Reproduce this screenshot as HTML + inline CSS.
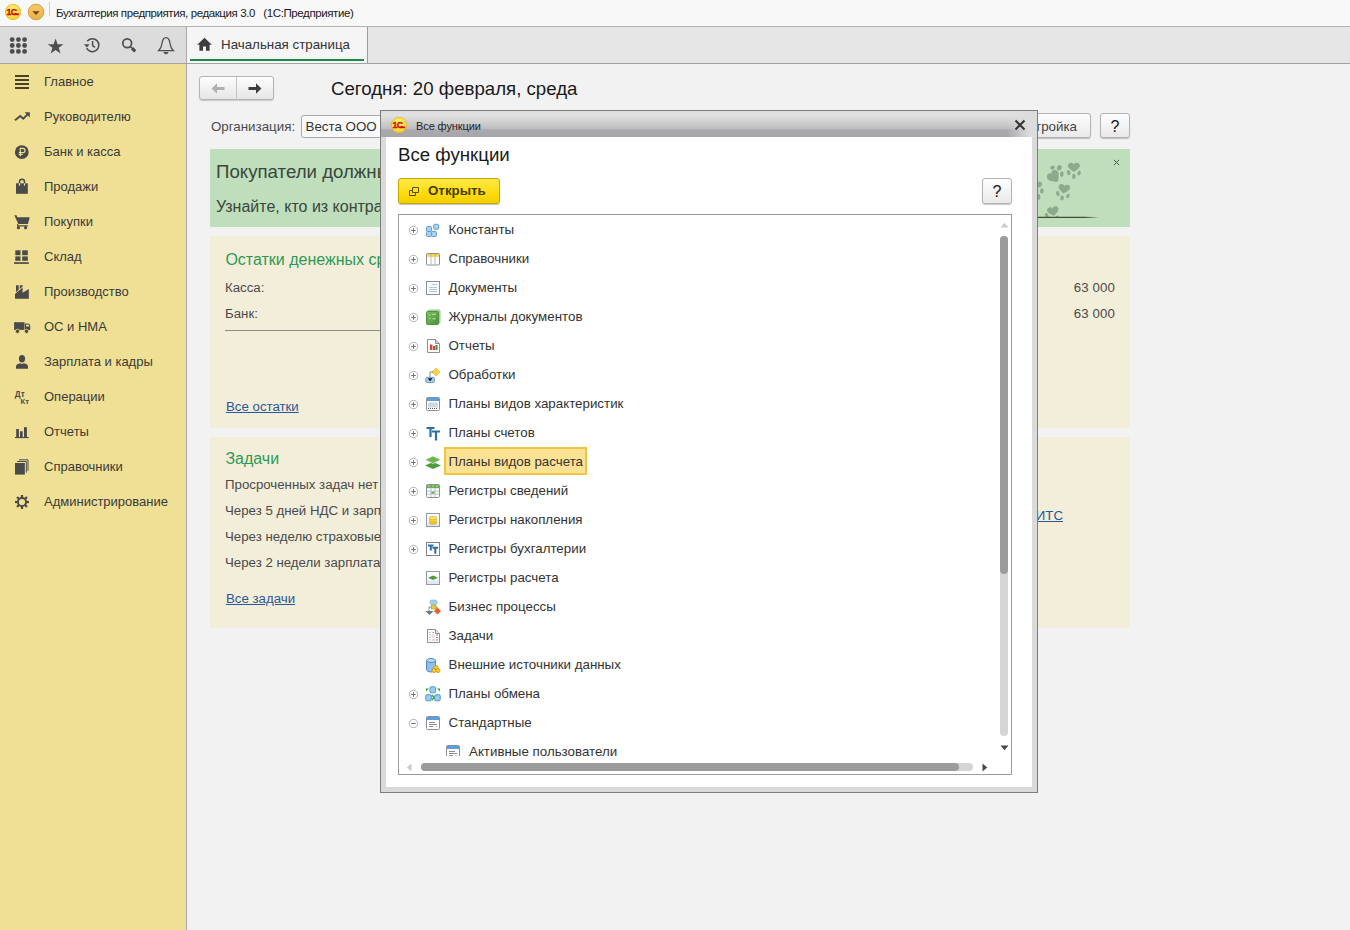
<!DOCTYPE html>
<html lang="ru">
<head>
<meta charset="utf-8">
<title>Бухгалтерия предприятия, редакция 3.0</title>
<style>
*{box-sizing:border-box;margin:0;padding:0}
html,body{width:1350px;height:930px;overflow:hidden}
body{position:relative;background:#f2f2f2;font-family:"Liberation Sans",Arial,sans-serif;font-size:13.33px;color:#333;}
.abs{position:absolute}
#titlebar{left:0;top:0;width:1350px;height:27px;background:#f8f8f8;border-bottom:1px solid #b4b4b4}
#titlebar .t{left:56px;top:6px;font-size:11.5px;line-height:14px;color:#1a1a1a;white-space:pre;letter-spacing:-0.4px}
#toolbar{left:0;top:27px;width:1350px;height:37px;background:linear-gradient(to right,#dcdcdc 186px,#e6e6e6 186px);border-bottom:1px solid #a3a3a3}
#tab{left:187px;top:27px;width:181px;height:36px;background:#f5f5f5;border-right:1px solid #9c9c9c}
#tab .u{left:3px;top:32px;width:174px;height:2px;background:#198a4a}
#tab .t{left:34px;top:10px;color:#333;white-space:nowrap}
#sidebar{left:0;top:64px;width:187px;height:866px;background:#f0e095;border-right:1px solid #a9a9a9}
.si{left:0;width:186px;height:35px}
.si span{position:absolute;left:44px;top:9px;white-space:nowrap;color:#3a3a3a}
.si svg{position:absolute;left:0;top:0;width:44px;height:35px}

.si span{top:10px;font-size:13px}
#navb{left:199px;top:76px;width:75px;height:24px;border:1px solid #b4b4b4;border-radius:3px;background:linear-gradient(#fdfdfd,#e6e6e6);box-shadow:0 1px 1px rgba(0,0,0,.18)}
#navb i{position:absolute;left:36px;top:0;width:1px;height:23px;background:#c4c4c4}
#today{left:331px;top:78px;font-size:18.67px;line-height:21px;color:#1a1a1a;white-space:nowrap}
#orgl{left:211px;top:119px;line-height:16px;color:#4a4a4a;white-space:nowrap}
#orgi{left:301px;top:115px;width:700px;height:23px;border:1px solid #a9a9a9;border-radius:3px;background:#f9f9f9}
#orgi span{position:absolute;left:3.5px;top:3px;line-height:16px;color:#333;white-space:nowrap}
.btn{border:1px solid #b3b3b3;border-radius:3px;background:linear-gradient(#fefefe,#e9e9e9);box-shadow:0 1px 1px rgba(0,0,0,.22);color:#333;text-align:center;white-space:nowrap}
#setb{left:1000px;top:113px;width:91px;height:25px;line-height:26px;text-align:right;padding-right:13px;color:#444}
#helpb{left:1100px;top:113px;width:30px;height:25px;line-height:26px;font-size:16px;color:#111}
#banner{left:210px;top:149px;width:920px;height:78px;background:#bedebc;overflow:hidden}
#banner .h{left:6px;top:12px;font-size:18.67px;line-height:22px;color:#3a463a;white-space:nowrap}
#banner .p{left:6px;top:48px;font-size:16px;line-height:20px;color:#3a463a;white-space:nowrap}
#banner .x{left:901px;top:8px;width:10px;height:10px}
.panel{left:210px;width:920px;background:#f3eeda}
.panel .h{left:15.4px;margin-top:1px;font-size:16px;line-height:20px;color:#2c9a55;white-space:nowrap}
.panel .l{left:15px;margin-top:1px;font-size:13.25px;line-height:16px;color:#4a4a4a;white-space:nowrap}
.panel .a{left:16px;margin-top:1px;font-size:13.25px;line-height:16px;color:#2b579a;text-decoration:underline;white-space:nowrap}
.panel .r{right:15px;margin-top:1px;font-size:13.25px;line-height:16px;color:#4a4a4a;white-space:nowrap;letter-spacing:.1px}

#dlg{left:380px;top:110px;width:658px;height:683px;border:1px solid #7d7d7d;background:#dadada}
#dlgt{left:0;top:0;width:656px;height:26px;background:linear-gradient(#dcdcdc 0%,#e2e2e2 14%,#d2d2d2 40%,#bdbdbf 69%,#aaaaae 72%,#a6a6aa 100%)}
#dlgt:after{content:"";position:absolute;left:626px;top:0;width:30px;height:26px;background:linear-gradient(to right,rgba(220,220,220,0),rgba(220,220,220,1) 75%)}
#dlgt .t{left:35px;top:9px;font-size:11px;line-height:13px;color:#222;white-space:nowrap;letter-spacing:-.1px}
#dlgc{left:5px;top:26px;width:646px;height:650px;background:#fff}
#dlgc .h{left:12px;top:7px;font-size:18.67px;line-height:21px;color:#1a1a1a;white-space:nowrap}
#openb{left:12px;top:41px;width:102px;height:26px;border:1px solid #c9a700;border-radius:3px;background:linear-gradient(#ffe94a,#ffdd10 55%,#f3cf00);box-shadow:0 1px 1px rgba(0,0,0,.25)}
#openb span{position:absolute;left:29px;top:4px;font-weight:bold;font-size:13.33px;line-height:16px;color:#453a00;white-space:nowrap}
#dhelp{left:596px;top:41px;width:30px;height:26px;line-height:26px;font-size:16px;color:#111}
#tree{left:12px;top:77px;width:614px;height:561px;border:1px solid #9c9c9c;background:#fff;overflow:hidden}
.tr{left:0;width:600px;height:29px}
.tr span{position:absolute;left:49.5px;top:0;line-height:27px;font-size:13.33px;color:#333;white-space:nowrap}
.tr .e{position:absolute;left:9px;top:9px;width:11px;height:11px}
.tr .ic{position:absolute;left:26px;top:6px;width:16px;height:16px}
.tr.c span{left:70px}
.tr.c .ic{left:46px}
#sel{left:45px;top:232px;width:143px;height:28px;background:#fbe294;border:2px solid #f0c53e}
</style>
</head>
<body>
<div id="titlebar" class="abs"><svg class="abs" style="left:4px;top:3px" width="18" height="18" viewBox="0 0 18 18"><defs><radialGradient id="lg13" cx="50%" cy="35%" r="70%"><stop offset="0" stop-color="#fff27a"/><stop offset="1" stop-color="#f4cf22"/></radialGradient></defs><circle cx="9" cy="9" r="7.7" fill="url(#lg13)" stroke="#dcb932" stroke-width=".8"/><text x="2.5" y="12.2" font-family="Liberation Sans,sans-serif" font-weight="bold" font-size="8.8" fill="#cc0f0c" stroke="#cc0f0c" stroke-width=".35" letter-spacing="-0.6">1С</text><path d="M9.6 11.35H15" stroke="#cc0f0c" stroke-width="1.7"/></svg><svg class="abs" style="left:27px;top:3px" width="18" height="18" viewBox="0 0 18 18"><defs><linearGradient id="og" x1="0" y1="0" x2="0" y2="1"><stop offset="0" stop-color="#f6c869"/><stop offset="1" stop-color="#eeb042"/></linearGradient></defs><circle cx="9" cy="9" r="7.8" fill="url(#og)" stroke="#c99a3e" stroke-width=".9"/><path d="M5.3 8.2H12.7L9 12Z" fill="#6a4a12"/></svg><div class="abs" style="left:49px;top:2px;width:1px;height:14px;background:#d0d0d0"></div><span class="t abs">Бухгалтерия предприятия, редакция 3.0   (1С:Предприятие)</span></div>
<div id="toolbar" class="abs"><svg class="abs" style="left:0;top:0" width="186" height="36" viewBox="0 0 186 36"><circle cx="12.2" cy="12.6" r="2.4" fill="#4d4d4d"/><circle cx="18.4" cy="12.6" r="2.4" fill="#4d4d4d"/><circle cx="24.6" cy="12.6" r="2.4" fill="#4d4d4d"/><circle cx="12.2" cy="18.5" r="2.4" fill="#4d4d4d"/><circle cx="18.4" cy="18.5" r="2.4" fill="#4d4d4d"/><circle cx="24.6" cy="18.5" r="2.4" fill="#4d4d4d"/><circle cx="12.2" cy="24.4" r="2.4" fill="#4d4d4d"/><circle cx="18.4" cy="24.4" r="2.4" fill="#4d4d4d"/><circle cx="24.6" cy="24.4" r="2.4" fill="#4d4d4d"/><polygon points="55.60,11.50 57.54,17.13 63.49,17.24 58.74,20.82 60.48,26.51 55.60,23.10 50.72,26.51 52.46,20.82 47.71,17.24 53.66,17.13" fill="#4d4d4d"/><path d="M87.2 14.2A6.5 6.5 0 1 1 86.6 21.2" stroke="#4d4d4d" stroke-width="1.5" fill="none"/><path d="M84 17.2H89.6L86.8 20.6Z" fill="#4d4d4d"/><path d="M92.6 14V18.6L95 20.4" stroke="#4d4d4d" stroke-width="1.5" fill="none"/><circle cx="127.2" cy="16.3" r="4.4" stroke="#4d4d4d" stroke-width="1.7" fill="none"/><path d="M130.6 19.8L132 21.2" stroke="#4d4d4d" stroke-width="1.7"/><path d="M132 21.2L135.2 24.4" stroke="#4d4d4d" stroke-width="3.2" fill="none"/><path d="M166 10.6C163 10.6 162.4 13.4 162 16.5C161.6 19.6 160.6 21.8 158.6 23.7H173.4C171.4 21.8 170.4 19.6 170 16.5C169.6 13.4 169 10.6 166 10.6Z" stroke="#4d4d4d" stroke-width="1.3" fill="none"/><path d="M163.8 25.6H168.2L166 27Z" stroke="#4d4d4d" stroke-width="1" fill="#4d4d4d"/></svg><div class="abs" style="left:186px;top:0;width:1px;height:36px;background:#a9a9a9"></div></div>
<div id="tab" class="abs"><svg class="abs" style="left:0;top:0" width="34" height="36" viewBox="0 0 34 36"><path d="M17.5 10.8L10.2 17.8H12.4V23.7H16V19.6H19V23.7H22.6V17.8H24.8Z" fill="#3e3e3e"/></svg><span class="t abs">Начальная страница</span><div class="u abs"></div></div>
<div id="sidebar" class="abs">
<div class="si abs" style="top:0px"><svg viewBox="0 0 44 35"><path d="M15 12H29M15 16H29M15 20H29M15 24H29" stroke="#4b4424" stroke-width="2" fill="none"/></svg><span>Главное</span></div>
<div class="si abs" style="top:35px"><svg viewBox="0 0 44 35"><path d="M15 21.3L20.3 17L23.3 19.6L27.6 15.3" stroke="#4a4a4a" stroke-width="1.9" fill="none" stroke-linejoin="miter"/><path d="M24.6 13.2H29.8V18.4Z" fill="#4a4a4a"/></svg><span>Руководителю</span></div>
<div class="si abs" style="top:70px"><svg viewBox="0 0 44 35"><circle cx="21.8" cy="18.1" r="6.9" fill="#4a4a4a"/><path d="M20.3 22.3V14.4H22.9A2.1 2.1 0 0 1 22.9 18.6H18.8M18.8 20.5H22.8" stroke="#f0e095" stroke-width="1.2" fill="none"/></svg><span>Банк и касса</span></div>
<div class="si abs" style="top:105px"><svg viewBox="0 0 44 35"><path d="M16 14.3H27.8V24.8H16Z" fill="#4a4a4a"/><path d="M19.5 17V12.8A2.5 2.5 0 0 1 24.5 12.8V17" stroke="#4a4a4a" stroke-width="1.5" fill="none"/><path d="M19.5 14.3V16.8M24.5 14.3V16.8" stroke="#f0e095" stroke-width="1.2"/></svg><span>Продажи</span></div>
<div class="si abs" style="top:140px"><svg viewBox="0 0 44 35"><path d="M14.3 11.3H16.6L17.2 13.2H29.8L27.9 20H18.3Z" fill="#4a4a4a"/><path d="M17.6 20V21.8H27.8" stroke="#4a4a4a" stroke-width="1.2" fill="none"/><circle cx="18.4" cy="23.7" r="1.6" fill="#4a4a4a"/><circle cx="25.6" cy="23.7" r="1.6" fill="#4a4a4a"/></svg><span>Покупки</span></div>
<div class="si abs" style="top:175px"><svg viewBox="0 0 44 35"><rect x="15.3" y="11.3" width="5.2" height="4.9" fill="#4a4a4a"/><rect x="22.2" y="11.3" width="5.6" height="4.9" fill="#4a4a4a"/><rect x="15.3" y="17.4" width="5.2" height="4.4" fill="#4a4a4a"/><rect x="22.2" y="17.4" width="5.6" height="4.4" fill="#4a4a4a"/><rect x="14.1" y="23.2" width="14.7" height="1.7" fill="#4a4a4a"/></svg><span>Склад</span></div>
<div class="si abs" style="top:210px"><svg viewBox="0 0 44 35"><path d="M15 24.8V20L22.6 13.4V18.8L28.8 15V24.8Z" fill="#4a4a4a"/><path d="M16 11.3H18.7V15.8L16 18.2ZM19.8 11.3H22.6V12.6L19.8 15Z" fill="#4a4a4a"/></svg><span>Производство</span></div>
<div class="si abs" style="top:245px"><svg viewBox="0 0 44 35"><path d="M14.1 13.2H24.5V20.9H14.1Z" fill="#4a4a4a"/><path d="M25 14.4H27.6A2.6 2.6 0 0 1 30.2 17V20.9H25Z" fill="#4a4a4a"/><path d="M26.2 15.4H28A1.4 1.4 0 0 1 29.2 16.8V17.6H26.2Z" fill="#e9dcae"/><circle cx="17.5" cy="22.3" r="2.1" fill="#4a4a4a" stroke="#f0e095" stroke-width=".7"/><circle cx="26.5" cy="22.3" r="2.1" fill="#4a4a4a" stroke="#f0e095" stroke-width=".7"/></svg><span>ОС и НМА</span></div>
<div class="si abs" style="top:280px"><svg viewBox="0 0 44 35"><ellipse cx="22" cy="14.7" rx="3.1" ry="3.7" fill="#4a4a4a"/><path d="M16 24.8V22.4C16 20.4 18 19.6 20 19.2L22 20L24 19.2C26 19.6 28 20.4 28 22.4V24.8Z" fill="#4a4a4a"/></svg><span>Зарплата и кадры</span></div>
<div class="si abs" style="top:315px"><svg viewBox="0 0 44 35"><text x="14.8" y="17.6" font-family="Liberation Sans,sans-serif" font-weight="bold" font-size="8.2" fill="#4a4a4a">Дт</text><text x="20.5" y="24.8" font-family="Liberation Sans,sans-serif" font-weight="bold" font-size="7.6" fill="#4a4a4a">Кт</text></svg><span>Операции</span></div>
<div class="si abs" style="top:350px"><svg viewBox="0 0 44 35"><rect x="16.2" y="15" width="2.7" height="8" fill="#4a4a4a"/><rect x="20" y="17.3" width="2.7" height="5.7" fill="#4a4a4a"/><rect x="24" y="13.2" width="2.9" height="9.8" fill="#4a4a4a"/><rect x="15" y="23" width="13.8" height="1.1" fill="#4a4a4a"/></svg><span>Отчеты</span></div>
<div class="si abs" style="top:385px"><svg viewBox="0 0 44 35"><rect x="15" y="14" width="9.8" height="11.6" fill="#4a4a4a"/><path d="M17 12.5H26.3V23.6M19 10.8H28V21.8" stroke="#4a4a4a" stroke-width="1" fill="none"/></svg><span>Справочники</span></div>
<div class="si abs" style="top:420px"><svg viewBox="0 0 44 35"><circle cx="22" cy="18" r="4.1" fill="none" stroke="#4a4a4a" stroke-width="2"/><rect x="20.9" y="11" width="2.2" height="3" fill="#4a4a4a" transform="rotate(0 22 18)"/><rect x="20.9" y="11" width="2.2" height="3" fill="#4a4a4a" transform="rotate(45 22 18)"/><rect x="20.9" y="11" width="2.2" height="3" fill="#4a4a4a" transform="rotate(90 22 18)"/><rect x="20.9" y="11" width="2.2" height="3" fill="#4a4a4a" transform="rotate(135 22 18)"/><rect x="20.9" y="11" width="2.2" height="3" fill="#4a4a4a" transform="rotate(180 22 18)"/><rect x="20.9" y="11" width="2.2" height="3" fill="#4a4a4a" transform="rotate(225 22 18)"/><rect x="20.9" y="11" width="2.2" height="3" fill="#4a4a4a" transform="rotate(270 22 18)"/><rect x="20.9" y="11" width="2.2" height="3" fill="#4a4a4a" transform="rotate(315 22 18)"/></svg><span>Администрирование</span></div>
</div>
<div id="navb" class="abs"><i></i>
<svg class="abs" style="left:10px;top:5px" width="16" height="13" viewBox="0 0 16 13"><path d="M7 1.2 L1.6 6.5 L7 11.8 L7 8 L14.5 8 L14.5 5 L7 5 Z" fill="#b0b0b0"/></svg>
<svg class="abs" style="left:47px;top:5px" width="16" height="13" viewBox="0 0 16 13"><path d="M9 1.2 L14.4 6.5 L9 11.8 L9 8 L1.5 8 L1.5 5 L9 5 Z" fill="#3d3d3d"/></svg>
</div>
<div id="today" class="abs">Сегодня: 20 февраля, среда</div>
<div id="orgl" class="abs">Организация:</div>
<div id="orgi" class="abs"><span>Веста ООО</span></div>
<div id="setb" class="abs btn">Настройка</div>
<div id="helpb" class="abs btn">?</div>
<div id="banner" class="abs">
<div class="h abs">Покупатели должны вам деньги?</div>
<div class="p abs">Узнайте, кто из контрагентов и сколько должен вам заплатить</div>
<svg class="abs" style="left:800px;top:0" width="120" height="78" viewBox="0 0 120 78"><defs><clipPath id="pc"><rect x="0" y="0" width="120" height="68"/></clipPath></defs><g fill="#8fa98c" clip-path="url(#pc)"><path d="M0,0.85C-0.3,0.6 -1,0.1 -1,-0.35C-1,-0.75 -0.7,-0.95 -0.45,-0.95C-0.2,-0.95 0,-0.75 0,-0.55C0,-0.75 0.2,-0.95 0.45,-0.95C0.7,-0.95 1,-0.75 1,-0.35C1,0.1 0.3,0.6 0,0.85Z" transform="translate(63.9,18.6) rotate(0) scale(6.0,5.2)"/><ellipse cx="58.7" cy="23.6" rx="1.7" ry="2.6" transform="rotate(-20 58.7 23.6)"/><ellipse cx="63.9" cy="27.4" rx="1.8" ry="2.6" transform="rotate(0 63.9 27.4)"/><ellipse cx="69" cy="24.1" rx="1.7" ry="2.4" transform="rotate(20 69 24.1)"/><path d="M0,0.85C-0.3,0.6 -1,0.1 -1,-0.35C-1,-0.75 -0.7,-0.95 -0.45,-0.95C-0.2,-0.95 0,-0.75 0,-0.55C0,-0.75 0.2,-0.95 0.45,-0.95C0.7,-0.95 1,-0.75 1,-0.35C1,0.1 0.3,0.6 0,0.85Z" transform="translate(54.1,40.2) rotate(8) scale(5.8,5.0)"/><ellipse cx="47.8" cy="44.6" rx="1.7" ry="2.6" transform="rotate(-15 47.8 44.6)"/><ellipse cx="52" cy="49" rx="1.8" ry="2.6" transform="rotate(5 52 49)"/><ellipse cx="57.9" cy="46.9" rx="1.7" ry="2.3" transform="rotate(25 57.9 46.9)"/><path d="M0,0.85C-0.3,0.6 -1,0.1 -1,-0.35C-1,-0.75 -0.7,-0.95 -0.45,-0.95C-0.2,-0.95 0,-0.75 0,-0.55C0,-0.75 0.2,-0.95 0.45,-0.95C0.7,-0.95 1,-0.75 1,-0.35C1,0.1 0.3,0.6 0,0.85Z" transform="translate(44.3,28.3) rotate(-38) scale(6.3,6.8)"/><ellipse cx="42.5" cy="18.6" rx="2.4" ry="1.9" transform="rotate(-30 42.5 18.6)"/><ellipse cx="49.3" cy="18.8" rx="2.3" ry="2.8" transform="rotate(20 49.3 18.8)"/><ellipse cx="51.8" cy="25.1" rx="1.8" ry="2.8" transform="rotate(5 51.8 25.1)"/><path d="M0,0.85C-0.3,0.6 -1,0.1 -1,-0.35C-1,-0.75 -0.7,-0.95 -0.45,-0.95C-0.2,-0.95 0,-0.75 0,-0.55C0,-0.75 0.2,-0.95 0.45,-0.95C0.7,-0.95 1,-0.75 1,-0.35C1,0.1 0.3,0.6 0,0.85Z" transform="translate(43.2,62.6) rotate(-12) scale(5.8,5.2)"/><ellipse cx="36.7" cy="66.5" rx="1.7" ry="2.6" transform="rotate(-20 36.7 66.5)"/><ellipse cx="47.5" cy="68.5" rx="1.6" ry="2" transform="rotate(0 47.5 68.5)"/><ellipse cx="29.4" cy="35.4" rx="2.4" ry="2.8" transform="rotate(20 29.4 35.4)"/><ellipse cx="31.9" cy="41.9" rx="1.9" ry="2.6" transform="rotate(0 31.9 41.9)"/><ellipse cx="28.5" cy="47.9" rx="1.9" ry="2.8" transform="rotate(-10 28.5 47.9)"/></g><path d="M0 67.7H74L89 68.3L74 69H0Z" fill="#4b4a33"/></svg>
<svg class="x abs" viewBox="0 0 10 10"><path d="M2.9 2.9L8.1 8.1M8.1 2.9L2.9 8.1" stroke="#4c5a4c" stroke-width="1" fill="none"/></svg>
</div>
<div class="panel abs" style="top:236px;height:192px">
<div class="h abs" style="top:13px">Остатки денежных средств</div>
<div class="l abs" style="top:43px">Касса:</div>
<div class="r abs" style="top:43px">63 000</div>
<div class="l abs" style="top:69px">Банк:</div>
<div class="r abs" style="top:69px">63 000</div>
<div class="abs" style="left:15px;top:94px;width:690px;height:1px;background:#8c8c8c"></div>
<div class="a abs" style="top:162px">Все остатки</div>
</div>
<div class="panel abs" style="top:437px;height:191px">
<div class="h abs" style="top:11px">Задачи</div>
<div class="l abs" style="top:39px">Просроченных задач нет</div>
<div class="l abs" style="top:65px">Через 5 дней НДС и зарплата</div>
<div class="l abs" style="top:91px">Через неделю страховые взносы</div>
<div class="l abs" style="top:117px">Через 2 недели зарплата</div>
<div class="a abs" style="top:153px">Все задачи</div>
<div class="a abs" style="top:70px;left:auto;right:67px">Подключить 1С:ИТС</div>
</div>
<!--MAIN-->
<div id="dlg" class="abs">
<div id="dlgt" class="abs"><svg class="abs" style="left:9px;top:5px" width="18" height="18" viewBox="0 0 18 18"><defs><radialGradient id="lgd" cx="50%" cy="35%" r="70%"><stop offset="0" stop-color="#fff27a"/><stop offset="1" stop-color="#f4cf22"/></radialGradient></defs><circle cx="9" cy="9" r="7.7" fill="url(#lgd)" stroke="#dcb932" stroke-width=".8"/><text x="2.5" y="12.2" font-family="Liberation Sans,sans-serif" font-weight="bold" font-size="8.8" fill="#cc0f0c" stroke="#cc0f0c" stroke-width=".35" letter-spacing="-0.6">1С</text><path d="M9.6 11.35H15" stroke="#cc0f0c" stroke-width="1.7"/></svg><span class="t abs">Все функции</span>
<svg class="abs" style="left:633px;top:7.5px;z-index:2" width="12" height="12" viewBox="0 0 12 12"><path d="M1.5 1.5L10.5 10.5M10.5 1.5L1.5 10.5" stroke="#333" stroke-width="2" fill="none"/></svg>
</div>
<div id="dlgc" class="abs">
<div class="h abs">Все функции</div>
<div id="openb" class="abs"><svg class="abs" style="left:10px;top:8px" width="10" height="9" viewBox="0 0 10 9"><path d="M3.5 0.5H9.5V5.5H3.5Z M0.5 3.5H3.5 M0.5 3.5V8.5H6.5V5.5" stroke="#5a4c00" stroke-width="1" fill="none"/></svg><span>Открыть</span></div>
<div id="dhelp" class="abs btn">?</div>
<div id="tree" class="abs">
<div id="sel" class="abs"></div>
<div class="tr abs" style="top:1px"><svg class="e" viewBox="0 0 11 11"><circle cx="5.5" cy="5.5" r="4.2" fill="#fff" stroke="#ababab" stroke-width=".9"/><path d="M3.2 5.5H7.8M5.5 3.2V7.8" stroke="#666" stroke-width=".9" fill="none"/></svg><svg class="ic" viewBox="0 0 16 16"><rect x="1.5" y="4.5" width="5" height="5" rx="1" fill="#a9d0ef" stroke="#5f9fd6"/><rect x="1.5" y="9.5" width="5" height="5" rx="1" fill="#a9d0ef" stroke="#5f9fd6"/><rect x="6.5" y="9.5" width="5" height="5" rx="1" fill="#a9d0ef" stroke="#5f9fd6"/><rect x="8.7" y="2.3" width="5" height="5" rx="1" fill="#a9d0ef" stroke="#5f9fd6"/></svg><span>Константы</span></div>
<div class="tr abs" style="top:30px"><svg class="e" viewBox="0 0 11 11"><circle cx="5.5" cy="5.5" r="4.2" fill="#fff" stroke="#ababab" stroke-width=".9"/><path d="M3.2 5.5H7.8M5.5 3.2V7.8" stroke="#666" stroke-width=".9" fill="none"/></svg><svg class="ic" viewBox="0 0 16 16"><rect x="1.5" y="2.5" width="13" height="11.5" rx="1" fill="#fff" stroke="#8f8f8f"/><rect x="2" y="3" width="12" height="2.8" fill="#f5d84a"/><path d="M6 3V13.5M10 3V13.5" stroke="#a8a8a8" stroke-width=".8" fill="none"/></svg><span>Справочники</span></div>
<div class="tr abs" style="top:59px"><svg class="e" viewBox="0 0 11 11"><circle cx="5.5" cy="5.5" r="4.2" fill="#fff" stroke="#ababab" stroke-width=".9"/><path d="M3.2 5.5H7.8M5.5 3.2V7.8" stroke="#666" stroke-width=".9" fill="none"/></svg><svg class="ic" viewBox="0 0 16 16"><rect x="1.5" y="1.5" width="13" height="13" fill="#fdfdfd" stroke="#8a9098"/><path d="M7 4.5H12M4 7.5H12M4 9.5H12M4 11.5H12" stroke="#a9c6e3" fill="none"/></svg><span>Документы</span></div>
<div class="tr abs" style="top:88px"><svg class="e" viewBox="0 0 11 11"><circle cx="5.5" cy="5.5" r="4.2" fill="#fff" stroke="#ababab" stroke-width=".9"/><path d="M3.2 5.5H7.8M5.5 3.2V7.8" stroke="#666" stroke-width=".9" fill="none"/></svg><svg class="ic" viewBox="0 0 16 16"><rect x="3" y="1" width="12" height="13" rx="1" fill="#b8d9a8" stroke="#9cc38b"/><defs><linearGradient id="jg" x1="0" y1="0" x2="1" y2="1"><stop offset="0" stop-color="#7cc063"/><stop offset="1" stop-color="#4c9139"/></linearGradient></defs><rect x="1.5" y="2.5" width="12" height="13" rx="1" fill="url(#jg)" stroke="#4f9440"/><path d="M4 6H5.5M4 9.5H5.5M7 5.2H11M7.5 9.8H10.5" stroke="#b9e0a8" fill="none"/></svg><span>Журналы документов</span></div>
<div class="tr abs" style="top:117px"><svg class="e" viewBox="0 0 11 11"><circle cx="5.5" cy="5.5" r="4.2" fill="#fff" stroke="#ababab" stroke-width=".9"/><path d="M3.2 5.5H7.8M5.5 3.2V7.8" stroke="#666" stroke-width=".9" fill="none"/></svg><svg class="ic" viewBox="0 0 16 16"><path d="M2.5 1.5H10.5L14.5 5.5V14.5H2.5Z" fill="#fff" stroke="#8a90a0"/><path d="M10.5 1.5V5.5H14.5" fill="#c9d3e2" stroke="#8a90a0"/><rect x="5" y="6.5" width="2.4" height="5.5" fill="#d9443a"/><rect x="8" y="8" width="2" height="4" fill="#d9443a"/><rect x="10.4" y="7" width="2.2" height="5" fill="#3e9a44"/></svg><span>Отчеты</span></div>
<div class="tr abs" style="top:146px"><svg class="e" viewBox="0 0 11 11"><circle cx="5.5" cy="5.5" r="4.2" fill="#fff" stroke="#ababab" stroke-width=".9"/><path d="M3.2 5.5H7.8M5.5 3.2V7.8" stroke="#666" stroke-width=".9" fill="none"/></svg><svg class="ic" viewBox="0 0 16 16"><path d="M11 1L15 5L11 9L7 5Z" fill="#f7d53f" stroke="#e0b92a" stroke-width=".6"/><path d="M7.5 5H5V10" stroke="#222" stroke-dasharray="1 1" fill="none"/><rect x="0.8" y="10.3" width="8.6" height="5.2" rx="1" fill="#a8cdea" stroke="#6fa4cf"/><path d="M2.6 11.3H7.6L5.1 14.2Z" fill="#111"/></svg><span>Обработки</span></div>
<div class="tr abs" style="top:175px"><svg class="e" viewBox="0 0 11 11"><circle cx="5.5" cy="5.5" r="4.2" fill="#fff" stroke="#ababab" stroke-width=".9"/><path d="M3.2 5.5H7.8M5.5 3.2V7.8" stroke="#666" stroke-width=".9" fill="none"/></svg><svg class="ic" viewBox="0 0 16 16"><rect x="1.5" y="1.5" width="13" height="13" rx="1" fill="#fff" stroke="#8a9098"/><rect x="2" y="2" width="12" height="3" fill="#5b9fe0"/><path d="M4 6.5V11.5M6 6.5V11.5M8 6.5V11.5M10 6.5V11.5M12 6.5V11.5" stroke="#9fb0c4" fill="none"/><path d="M3 12.5H13" stroke="#555" stroke-dasharray="1 1" fill="none"/></svg><span>Планы видов характеристик</span></div>
<div class="tr abs" style="top:204px"><svg class="e" viewBox="0 0 11 11"><circle cx="5.5" cy="5.5" r="4.2" fill="#fff" stroke="#ababab" stroke-width=".9"/><path d="M3.2 5.5H7.8M5.5 3.2V7.8" stroke="#666" stroke-width=".9" fill="none"/></svg><svg class="ic" viewBox="0 0 16 16"><path d="M1.5 3H9.5M5.5 3V12" stroke="#2f6ea5" stroke-width="2.2" fill="none"/><path d="M7 6.5H15M11 6.5V15.5" stroke="#2f6ea5" stroke-width="2.2" fill="none"/></svg><span>Планы счетов</span></div>
<div class="tr abs" style="top:233px"><svg class="e" viewBox="0 0 11 11"><circle cx="5.5" cy="5.5" r="4.2" fill="#fff" stroke="#ababab" stroke-width=".9"/><path d="M3.2 5.5H7.8M5.5 3.2V7.8" stroke="#666" stroke-width=".9" fill="none"/></svg><svg class="ic" viewBox="0 0 16 16"><path d="M8 8L16 11.5L8 15L0 11.5Z" fill="#4f9a3a"/><path d="M8 2L16 5.8L8 9.6L0 5.8Z" fill="#6ab84e" stroke="#fff" stroke-width=".6"/></svg><span>Планы видов расчета</span></div>
<div class="tr abs" style="top:262px"><svg class="e" viewBox="0 0 11 11"><circle cx="5.5" cy="5.5" r="4.2" fill="#fff" stroke="#ababab" stroke-width=".9"/><path d="M3.2 5.5H7.8M5.5 3.2V7.8" stroke="#666" stroke-width=".9" fill="none"/></svg><svg class="ic" viewBox="0 0 16 16"><rect x="1.5" y="1.5" width="13" height="13" rx="1" fill="#fff" stroke="#8a9098"/><rect x="2" y="2" width="12" height="3.2" fill="#6ab04c"/><path d="M2 8.2H14M2 11.2H14M6 5V14M10 5V14" stroke="#b7c3d0" fill="none"/><rect x="6.5" y="8.7" width="3" height="2" fill="#6ab04c"/><path d="M3 2.5L4 4L5 2.5ZM7 2.5L8 4L9 2.5ZM11 2.5L12 4L13 2.5Z" fill="#d6efc8"/></svg><span>Регистры сведений</span></div>
<div class="tr abs" style="top:291px"><svg class="e" viewBox="0 0 11 11"><circle cx="5.5" cy="5.5" r="4.2" fill="#fff" stroke="#ababab" stroke-width=".9"/><path d="M3.2 5.5H7.8M5.5 3.2V7.8" stroke="#666" stroke-width=".9" fill="none"/></svg><svg class="ic" viewBox="0 0 16 16"><rect x="1.5" y="1.5" width="13" height="13" fill="#fdfdfd" stroke="#8f9bab"/><rect x="2" y="11.5" width="12" height="2.5" fill="#dfe8f2"/><ellipse cx="8" cy="10.5" rx="4" ry="1.8" fill="#f2c832" stroke="#d9a81e" stroke-width=".6"/><ellipse cx="8" cy="8.3" rx="4" ry="1.8" fill="#f7d648" stroke="#d9a81e" stroke-width=".6"/><ellipse cx="8" cy="6.1" rx="4" ry="1.8" fill="#fbe26a" stroke="#d9a81e" stroke-width=".6"/></svg><span>Регистры накопления</span></div>
<div class="tr abs" style="top:320px"><svg class="e" viewBox="0 0 11 11"><circle cx="5.5" cy="5.5" r="4.2" fill="#fff" stroke="#ababab" stroke-width=".9"/><path d="M3.2 5.5H7.8M5.5 3.2V7.8" stroke="#666" stroke-width=".9" fill="none"/></svg><svg class="ic" viewBox="0 0 16 16"><rect x="1.5" y="1.5" width="13" height="13" fill="#fff" stroke="#7a8490"/><path d="M3 4.5H8.5M5.8 4.5V9.5" stroke="#2f6ea5" stroke-width="2" fill="none"/><path d="M7.5 6.8H13M10.3 6.8V12.8" stroke="#2f6ea5" stroke-width="2" fill="none"/></svg><span>Регистры бухгалтерии</span></div>
<div class="tr abs" style="top:349px"><svg class="ic" viewBox="0 0 16 16"><rect x="1.5" y="1.5" width="13" height="13" fill="#fdfdfd" stroke="#8f9bab"/><rect x="2" y="10.5" width="12" height="3.5" fill="#dfe8f2"/><path d="M8 5.5L13 7.8L8 10.1L3 7.8Z" fill="#4f9a3a"/></svg><span>Регистры расчета</span></div>
<div class="tr abs" style="top:378px"><svg class="ic" viewBox="0 0 16 16"><path d="M7 6V8H4V12M11 8H12V10" stroke="#8a8a8a" fill="none"/><path d="M6 1H11C12.5 2.5 12.5 4 11 5.5H6C4.5 4 4.5 2.5 6 1Z" fill="#9ed0f2" stroke="#6fb1de" stroke-width=".6"/><rect x="6.5" y="6" width="4.5" height="4" fill="#e8c84a" stroke="#c9a72a" stroke-width=".8"/><path d="M0.5 12H8.5L4.5 16Z" fill="#64788c"/><path d="M12.5 8.5L16 12L12.5 15.5L9 12Z" fill="#e2632f"/></svg><span>Бизнес процессы</span></div>
<div class="tr abs" style="top:407px"><svg class="ic" viewBox="0 0 16 16"><path d="M2.5 1.5H10.5L14.5 5.5V14.5H2.5Z" fill="#fff" stroke="#8a8f98"/><path d="M10.5 1.5V5.5H14.5" fill="#e4e7ec" stroke="#8a8f98"/><path d="M4.5 4.5H5.5M4.5 7H5.5M4.5 9.5H5.5M4.5 12H5.5" stroke="#7a8aa0" fill="none"/><path d="M7.5 4.5H9M11 7H13M11 9.5H13M7.5 12H9.5M11 12H13" stroke="#d9787a" fill="none"/><circle cx="8.3" cy="8.3" r="1.3" fill="none" stroke="#b8bcc4" stroke-width=".7"/></svg><span>Задачи</span></div>
<div class="tr abs" style="top:436px"><svg class="ic" viewBox="0 0 16 16"><path d="M1.5 3.5V12.5C1.5 14 4 15 6 15C8 15 10.5 14 10.5 12.5V3.5Z" fill="#8fc0ea" stroke="#4f8cc8"/><ellipse cx="6" cy="3.5" rx="4.5" ry="2" fill="#b9dcf6" stroke="#4f8cc8"/><circle cx="11" cy="10.5" r="2" fill="#f7d040" stroke="#d69a12"/><circle cx="9.2" cy="13.5" r="2" fill="#f7d040" stroke="#d69a12"/><circle cx="13" cy="13.5" r="2" fill="#f7d040" stroke="#d69a12"/></svg><span>Внешние источники данных</span></div>
<div class="tr abs" style="top:465px"><svg class="e" viewBox="0 0 11 11"><circle cx="5.5" cy="5.5" r="4.2" fill="#fff" stroke="#ababab" stroke-width=".9"/><path d="M3.2 5.5H7.8M5.5 3.2V7.8" stroke="#666" stroke-width=".9" fill="none"/></svg><svg class="ic" viewBox="0 0 16 16"><rect x="5" y="0.8" width="5.5" height="6" rx="1.1" fill="#9ccdf0" stroke="#4f95d0"/><rect x="0.8" y="8.8" width="5.5" height="6" rx="1.1" fill="#9ccdf0" stroke="#4f95d0"/><rect x="9.7" y="8.8" width="5.5" height="6" rx="1.1" fill="#9ccdf0" stroke="#4f95d0"/><path d="M1 2.5H4L1 5.5ZM15 2.5H12L15 5.5Z" fill="#2fa836"/><path d="M7 9L9 11.5L7 14" stroke="#2fa836" stroke-width="1.4" fill="none"/></svg><span>Планы обмена</span></div>
<div class="tr abs" style="top:494px"><svg class="e" viewBox="0 0 11 11"><circle cx="5.5" cy="5.5" r="4.2" fill="#fff" stroke="#ababab" stroke-width=".9"/><path d="M3.2 5.5H7.8" stroke="#666" stroke-width=".9" fill="none"/></svg><svg class="ic" viewBox="0 0 16 16"><rect x="1.5" y="1.5" width="13" height="13" rx="1" fill="#fff" stroke="#8a9098"/><rect x="2" y="2" width="12" height="3" fill="#5b9fe0"/><path d="M4 7.5H10M4 9.5H12M4 11.5H8" stroke="#8a8a8a" fill="none"/><path d="M9.5 11.5H12.5" stroke="#c9d3e2" fill="none"/></svg><span>Стандартные</span></div>
<div class="tr abs c" style="top:523px"><svg class="ic" viewBox="0 0 16 16"><rect x="1.5" y="1.5" width="13" height="13" rx="1" fill="#fff" stroke="#8a9098"/><rect x="2" y="2" width="12" height="3" fill="#5b9fe0"/><path d="M4 7.5H10M4 9.5H12M4 11.5H8" stroke="#8a8a8a" fill="none"/><path d="M9.5 11.5H12.5" stroke="#c9d3e2" fill="none"/></svg><span>Активные пользователи</span></div>

<div class="abs" style="left:0;top:541px;width:612px;height:17px;background:#fff"></div>
<div class="abs" style="left:601px;top:21px;width:8px;height:500px;border-radius:4px;background:#d5d5d5"></div>
<div class="abs" style="left:601px;top:21px;width:8px;height:338px;border-radius:4px;background:#9b9b9b"></div>
<svg class="abs" style="left:601px;top:7px" width="9" height="6" viewBox="0 0 9 6"><path d="M0.5 5.5L4.5 0.8L8.5 5.5Z" fill="#cbcbcb"/></svg>
<svg class="abs" style="left:601px;top:530px" width="9" height="6" viewBox="0 0 9 6"><path d="M0.5 0.5L4.5 5.2L8.5 0.5Z" fill="#484848"/></svg>
<div class="abs" style="left:22px;top:548px;width:552px;height:8px;border-radius:4px;background:#d5d5d5"></div>
<div class="abs" style="left:22px;top:548px;width:538px;height:8px;border-radius:4px;background:#9b9b9b"></div>
<svg class="abs" style="left:7px;top:548px" width="6" height="9" viewBox="0 0 6 9"><path d="M5.5 0.5L0.8 4.5L5.5 8.5Z" fill="#cbcbcb"/></svg>
<svg class="abs" style="left:583px;top:548px" width="6" height="9" viewBox="0 0 6 9"><path d="M0.5 0.5L5.2 4.5L0.5 8.5Z" fill="#484848"/></svg>

</div>
</div>
</div>

</body>
</html>
